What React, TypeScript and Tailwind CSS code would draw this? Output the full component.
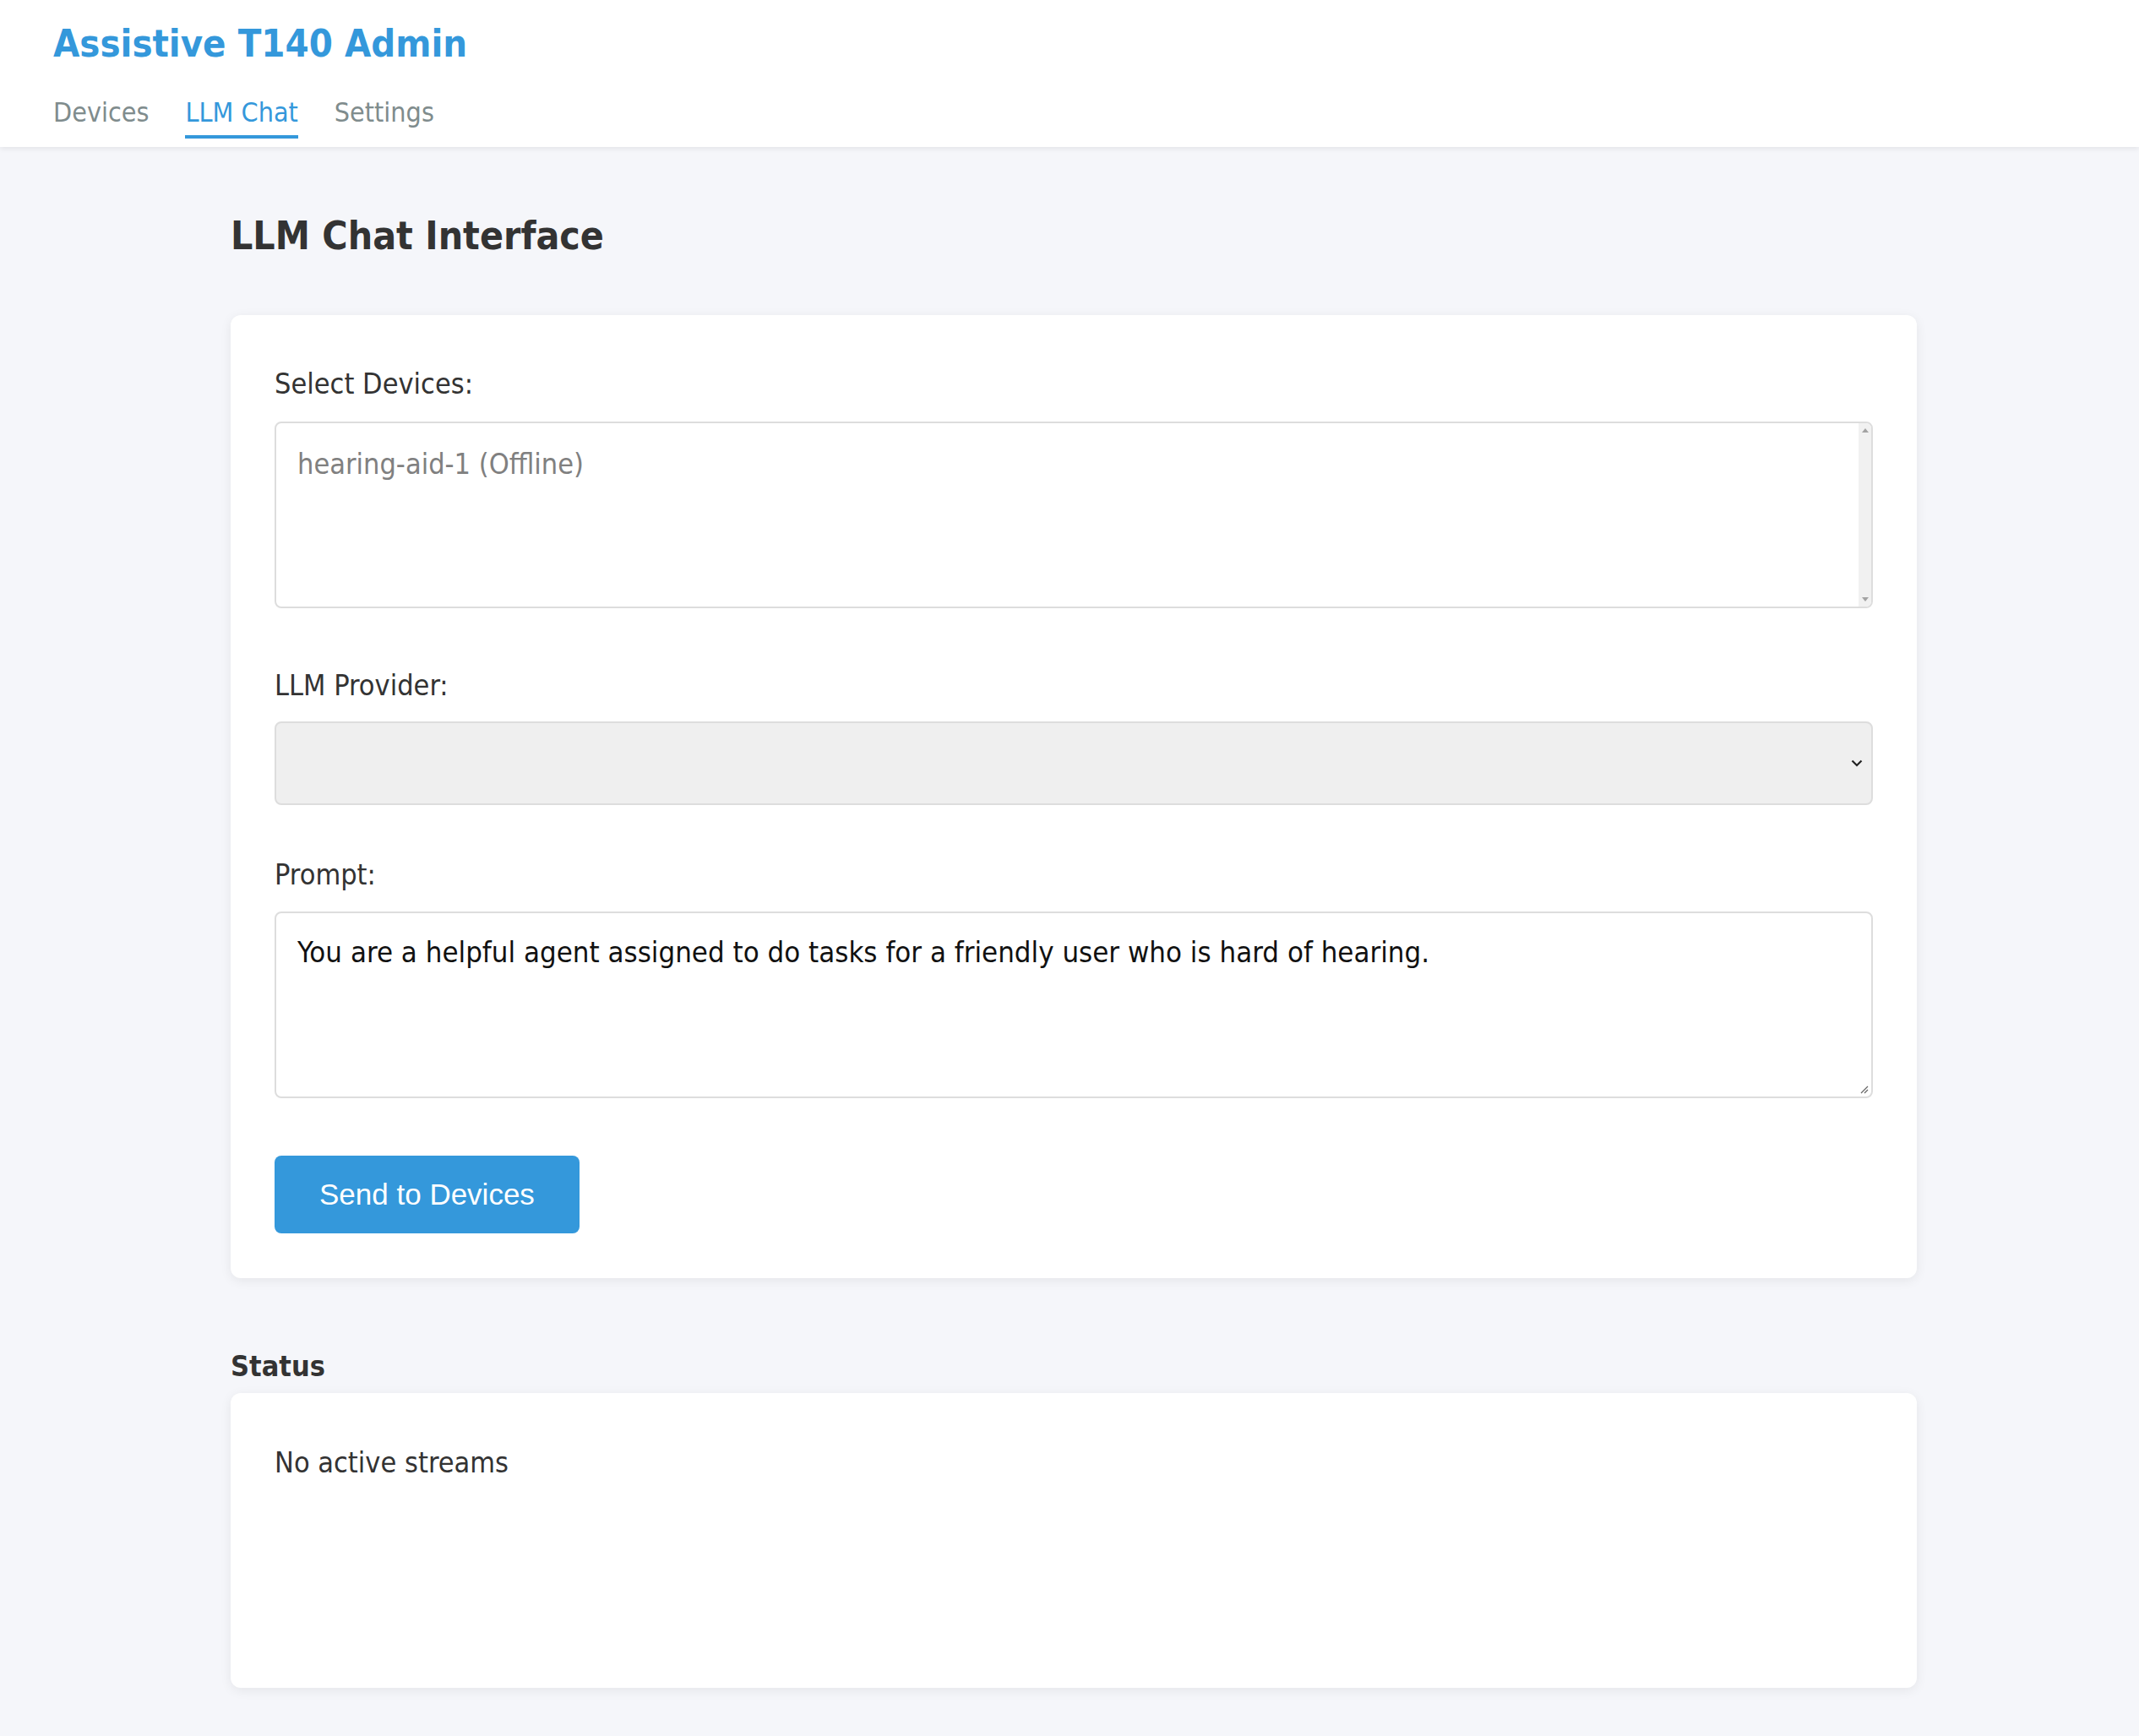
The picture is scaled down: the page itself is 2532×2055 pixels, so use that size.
import { useState } from "react";

const tabs = ["Devices", "LLM Chat", "Settings"];

export default function App() {
  const [active, setActive] = useState("LLM Chat");
  const [prompt] = useState(
    "You are a helpful agent assigned to do tasks for a friendly user who is hard of hearing."
  );

  return (
    <div className="min-h-[2055px] bg-[#f5f6fa] font-['DejaVu_Sans_Condensed','DejaVu_Sans',sans-serif] font-stretch-condensed text-[#333]">
      <header className="bg-white px-[63px] pt-[24px] pb-[10px] shadow-[0_2px_6px_rgba(0,0,0,0.08)]">
        <h1 className="text-[45px] leading-[56px] font-bold text-[#3498db]">
          Assistive T140 Admin
        </h1>
        <nav className="mt-[33px] flex gap-[43px]">
          {tabs.map((tab) => (
            <button
              key={tab}
              onClick={() => setActive(tab)}
              className={
                active === tab
                  ? "text-[32px] leading-[40px] pb-[7px] border-b-[4px] border-[#3498db] text-[#3498db]"
                  : "text-[32px] leading-[40px] pb-[7px] border-b-[4px] border-transparent text-[#7f8c8d]"
              }
            >
              {tab}
            </button>
          ))}
        </nav>
      </header>

      <main className="w-[2006px] mx-auto pl-[10px] pt-[77px] pb-[57px]">
        <h2 className="text-[46px] leading-[56px] font-bold">LLM Chat Interface</h2>

        <div className="mt-[66px] bg-white rounded-[12px] shadow-[0_3px_14px_rgba(0,0,0,0.07)] px-[52px] pt-[61px] pb-[53px]">
          <label className="block text-[34px] leading-[40px]">Select Devices:</label>
          <div className="mt-[25px] h-[221px] flex border-2 border-[#dddddd] rounded-[8px] overflow-hidden">
            <div className="flex-1 pl-[25px] pt-[28px]">
              <div className="text-[34px] leading-[40px] text-[#808080]">
                hearing-aid-1 (Offline)
              </div>
            </div>
            <div className="w-[15px] bg-[#f1f1f1] flex flex-col items-center justify-between py-[6px]">
              <svg width="8" height="5" viewBox="0 0 8 5">
                <path d="M0 5 L4 0 L8 5 Z" fill="#a3a3a3" />
              </svg>
              <svg width="8" height="5" viewBox="0 0 8 5">
                <path d="M0 0 L4 5 L8 0 Z" fill="#a3a3a3" />
              </svg>
            </div>
          </div>

          <label className="block mt-[71px] text-[34px] leading-[40px]">LLM Provider:</label>
          <div className="mt-[23px] h-[99px] flex items-center justify-end pr-[10px] bg-[#efefef] border-2 border-[#dddddd] rounded-[8px]">
            <svg width="14" height="9" viewBox="0 0 14 9" fill="none">
              <path d="M1.5 1.5 L7 7 L12.5 1.5" stroke="#222" strokeWidth="2.2" />
            </svg>
          </div>

          <label className="block mt-[62px] text-[34px] leading-[40px]">Prompt:</label>
          <div className="relative mt-[24px] h-[221px] border-2 border-[#dddddd] rounded-[8px] pl-[25px] pt-[26px]">
            <p className="text-[34.5px] leading-[40px] text-[#111]">{prompt}</p>
            <svg
              className="absolute right-[3px] bottom-[3px]"
              width="10"
              height="10"
              viewBox="0 0 10 10"
            >
              <path d="M1 9 L9 1 M5 9 L9 5" stroke="#666" strokeWidth="1.2" />
            </svg>
          </div>

          <button className="mt-[68px] h-[92px] px-[53px] rounded-[8px] bg-[#3498db] text-white text-[35px] font-['Liberation_Sans',Arial,sans-serif] font-stretch-normal">
            Send to Devices
          </button>
        </div>

        <h3 className="mt-[82px] text-[34px] leading-[44px] font-bold">Status</h3>
        <div className="mt-[10px] h-[349px] bg-white rounded-[12px] shadow-[0_3px_14px_rgba(0,0,0,0.07)] px-[52px] pt-[62px]">
          <p className="text-[34px] leading-[40px]">No active streams</p>
        </div>
      </main>
    </div>
  );
}
